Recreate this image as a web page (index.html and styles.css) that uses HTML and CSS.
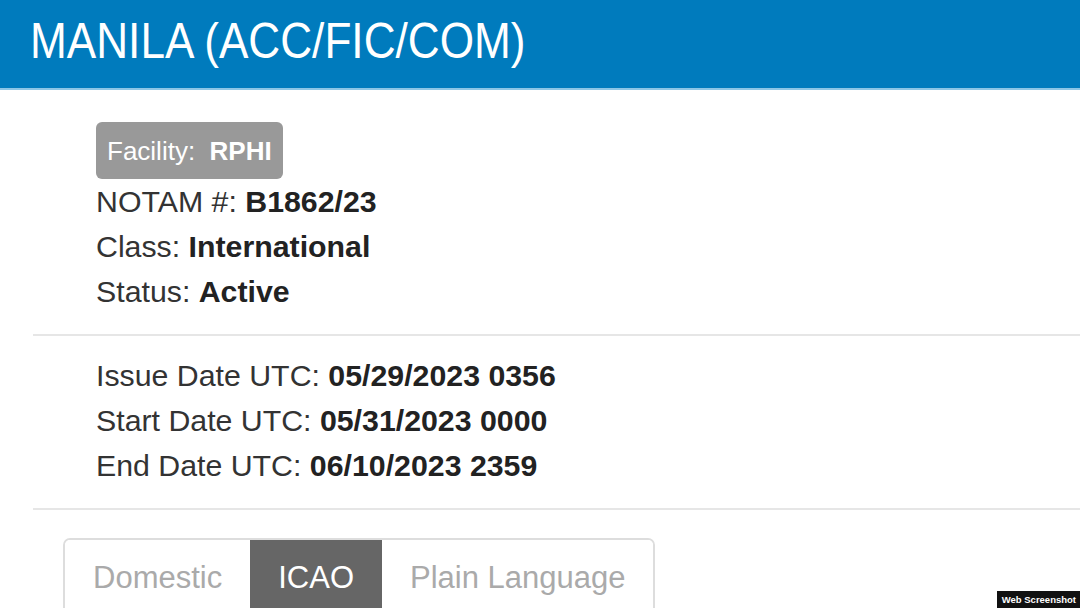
FILE: index.html
```html
<!DOCTYPE html>
<html lang="en">
<head>
    <meta charset="UTF-8">
    <meta name="viewport" content="width=device-width, initial-scale=1.0">
    <title>NOTAM B1862/23</title>
    <link rel="stylesheet" href="styles.css">
</head>
<body>
    <div class="header">
        <h1>MANILA (ACC/FIC/COM)</h1>
    </div>

    <div class="panel">
        <div class="section first">
            <span class="facility">Facility:&nbsp; <b>RPHI</b></span>
            <div class="row">NOTAM #: <b>B1862/23</b></div>
            <div class="row">Class: <b>International</b></div>
            <div class="row">Status: <b>Active</b></div>
        </div>

        <div class="section">
            <div class="row">Issue Date UTC: <b>05/29/2023 0356</b></div>
            <div class="row">Start Date UTC: <b>05/31/2023 0000</b></div>
            <div class="row">End Date UTC: <b>06/10/2023 2359</b></div>
        </div>

        <div class="tabs">
            <button class="tab">Domestic</button>
            <button class="tab active">ICAO</button>
            <button class="tab">Plain Language</button>
        </div>
    </div>

    <div class="watermark">Web Screenshot</div>
</body>
</html>
```

FILE: styles.css
```css
body {
    font-family: "Liberation Sans", Arial, sans-serif;
    background-color: #fff;
    color: #333;
    margin: 0;
    padding: 0;
    height: 608px;
    overflow: hidden;
}
.header {
    background-color: #007bbd;
    height: 88px;
    border-bottom: 2px solid #8cc6e6;
    padding-left: 30px;
}
/* the title font is narrow, squeeze Arial to match */
h1 {
    display: inline-block;
    margin: 0;
    font-weight: normal;
    font-size: 50px;
    line-height: 82px;
    color: #fff;
    transform: scaleX(0.883);
    transform-origin: left center;
}
.panel {
    padding-left: 33px;
}
.section {
    padding: 17px 0 20px 63px;
    border-bottom: 2px solid #e6e6e6;
}
.section.first {
    padding-top: 32px;
    padding-bottom: 20px;
}
.facility {
    display: inline-block;
    background-color: #999;
    color: #fff;
    font-size: 26px;
    line-height: 30px;
    padding: 14px 11px 13px 11px;
    border-radius: 6px;
}
.row {
    font-size: 30.3px;
    line-height: 45px;
    color: #333;
}
.row b {
    color: #222;
}
.tabs {
    display: inline-flex;
    margin: 28px 0 0 30px;
    border: 2px solid #ddd;
    border-radius: 7px;
    overflow: hidden;
}
.tab {
    font-family: "Liberation Sans", Arial, sans-serif;
    font-size: 31px;
    line-height: 45px;
    padding: 15px 28px 16px 28px;
    background: #fff;
    color: #aaa;
    border: none;
    margin: 0;
    cursor: pointer;
}
.tab.active {
    background-color: #666;
    color: #fff;
}
.watermark {
    position: absolute;
    right: 0;
    bottom: 0;
    background-color: #111;
    color: #fff;
    font-size: 9.5px;
    font-weight: bold;
    padding: 3px 4px 3px 5px;
}
```
